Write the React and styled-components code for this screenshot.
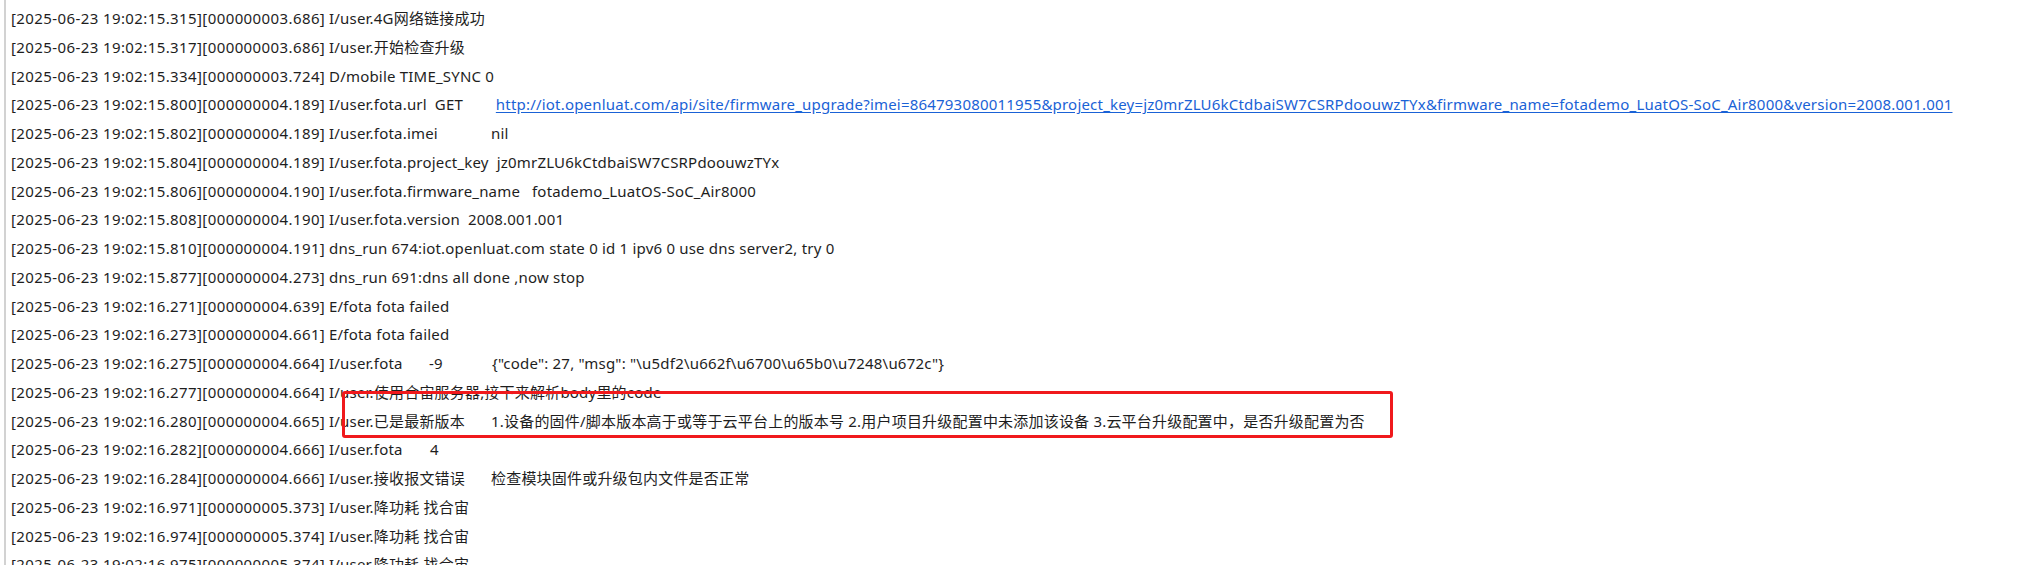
import React from "react";
import styled, { createGlobalStyle } from "styled-components";

const Global = createGlobalStyle`
  html, body { margin: 0; padding: 0; background: #ffffff; }
  body { width: 2021px; height: 565px; overflow: hidden; }
`;

const Panel = styled.div`
  position: relative;
  margin-left: 4px;
  height: 565px;
  border-left: 2px solid #d2d2d2;
  padding: 4px 0 0 5px;
  box-sizing: border-box;
  background: #ffffff;
  font-family: "Noto Sans", "Noto Sans CJK SC", sans-serif;
  font-size: 15px;
  letter-spacing: 0.2px;
  color: #1e1e1e;
  overflow: hidden;
`;

const Row = styled.div`
  height: 28.76px;
  line-height: 28.76px;
  white-space: pre;
`;

const Stamp = styled.span`
  display: inline-block;
  width: 318px;
  letter-spacing: 0.4px;
`;

const Key = styled.span`
  display: inline-block;
  box-sizing: border-box;
  min-width: ${(p) => p.$w}px;
  padding-right: 8px;
`;

const Link = styled.span`
  color: #1a62d6;
  text-decoration: underline;
  text-underline-offset: 2px;
`;

const Highlight = styled.div`
  position: absolute;
  left: 336px;
  top: 391px;
  width: 1051px;
  height: 47px;
  box-sizing: border-box;
  border: 3px solid #f0191c;
  border-radius: 3px;
  pointer-events: none;
`;

const rows = [
  ["[2025-06-23 19:02:15.315][000000003.686]", [["I/user.4G网络链接成功"]]],
  ["[2025-06-23 19:02:15.317][000000003.686]", [["I/user.开始检查升级"]]],
  ["[2025-06-23 19:02:15.334][000000003.724]", [["D/mobile TIME_SYNC 0"]]],
  [
    "[2025-06-23 19:02:15.800][000000004.189]",
    [
      ["I/user.fota.url", 102],
      ["GET", 61],
      [
        "http://iot.openluat.com/api/site/firmware_upgrade?imei=864793080011955&project_key=jz0mrZLU6kCtdbaiSW7CSRPdoouwzTYx&firmware_name=fotademo_LuatOS-SoC_Air8000&version=2008.001.001",
        0,
        true,
      ],
    ],
  ],
  ["[2025-06-23 19:02:15.802][000000004.189]", [["I/user.fota.imei", 162], ["nil"]]],
  ["[2025-06-23 19:02:15.804][000000004.189]", [["I/user.fota.project_key", 159], ["jz0mrZLU6kCtdbaiSW7CSRPdoouwzTYx"]]],
  ["[2025-06-23 19:02:15.806][000000004.190]", [["I/user.fota.firmware_name", 203], ["fotademo_LuatOS-SoC_Air8000"]]],
  ["[2025-06-23 19:02:15.808][000000004.190]", [["I/user.fota.version", 125], ["2008.001.001"]]],
  ["[2025-06-23 19:02:15.810][000000004.191]", [["dns_run 674:iot.openluat.com state 0 id 1 ipv6 0 use dns server2, try 0"]]],
  ["[2025-06-23 19:02:15.877][000000004.273]", [["dns_run 691:dns all done ,now stop"]]],
  ["[2025-06-23 19:02:16.271][000000004.639]", [["E/fota fota failed"]]],
  ["[2025-06-23 19:02:16.273][000000004.661]", [["E/fota fota failed"]]],
  [
    "[2025-06-23 19:02:16.275][000000004.664]",
    [["I/user.fota", 100], ["-9", 63], ['{"code": 27, "msg": "\\u5df2\\u662f\\u6700\\u65b0\\u7248\\u672c"}']],
  ],
  ["[2025-06-23 19:02:16.277][000000004.664]", [["I/user.使用合宙服务器,接下来解析body里的code"]]],
  [
    "[2025-06-23 19:02:16.280][000000004.665]",
    [
      ["I/user.已是最新版本", 162],
      ["1.设备的固件/脚本版本高于或等于云平台上的版本号 2.用户项目升级配置中未添加该设备 3.云平台升级配置中，是否升级配置为否"],
    ],
  ],
  ["[2025-06-23 19:02:16.282][000000004.666]", [["I/user.fota", 101], ["4"]]],
  ["[2025-06-23 19:02:16.284][000000004.666]", [["I/user.接收报文错误", 162], ["检查模块固件或升级包内文件是否正常"]]],
  ["[2025-06-23 19:02:16.971][000000005.373]", [["I/user.降功耗 找合宙"]]],
  ["[2025-06-23 19:02:16.974][000000005.374]", [["I/user.降功耗 找合宙"]]],
  ["[2025-06-23 19:02:16.975][000000005.374]", [["I/user.降功耗 找合宙"]]],
];

export default function App() {
  return (
    <>
      <Global />
      <Panel>
        {rows.map(([stamp, parts], i) => (
          <Row key={i}>
            <Stamp>{stamp}</Stamp>
            {parts.map(([text, w, link], j) =>
              link ? (
                <Link key={j}>{text}</Link>
              ) : w ? (
                <Key key={j} $w={w}>
                  {text}
                </Key>
              ) : (
                <span key={j}>{text}</span>
              )
            )}
          </Row>
        ))}
        <Highlight />
      </Panel>
    </>
  );
}
